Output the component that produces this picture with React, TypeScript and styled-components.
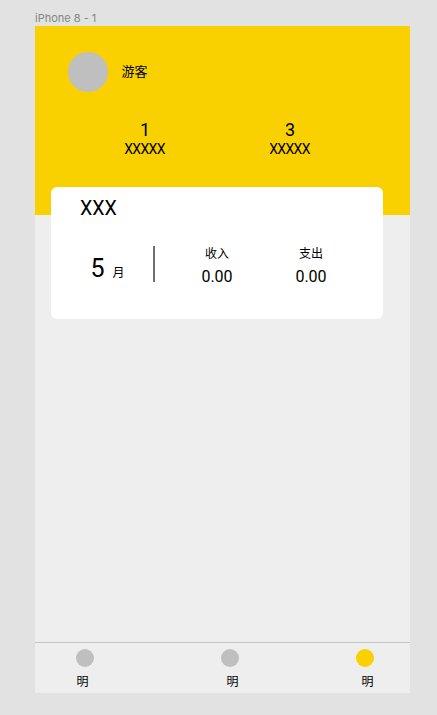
import React from 'react';
import styled, { createGlobalStyle } from 'styled-components';

const GlobalStyle = createGlobalStyle`
  * { box-sizing: border-box; }
  body {
    margin: 0;
    background: #e2e2e2;
    color: #000;
    font-family: Roboto, "Noto Sans CJK SC", sans-serif;
  }
`;

const Canvas = styled.main`
  width: 437px;
  height: 715px;
  padding: 10px 27px 0 35px;
  overflow: hidden;
  background: #e2e2e2;
`;

const FrameLabel = styled.div`
  height: 16px;
  font: 400 11px/16px Inter, sans-serif;
  color: #858585;
  white-space: nowrap;
`;

const Screen = styled.div`
  display: flex;
  flex-direction: column;
  width: 375px;
  height: 667px;
  background: #eee;
`;

const Header = styled.header`
  flex: none;
  height: 189px;
  padding-top: 26px;
  background: #f9d100;
`;

const Profile = styled.div`
  display: flex;
  align-items: center;
  gap: 13.5px;
  height: 40px;
  padding-left: 33px;
`;

const Circle = styled.div<{ $size: number; $active?: boolean }>`
  flex: none;
  width: ${(p) => p.$size}px;
  height: ${(p) => p.$size}px;
  border-radius: 50%;
  background: ${(p) => (p.$active ? '#f9d100' : '#bfbfbf')};
`;

const UserName = styled.span`
  font-size: 13px;
  line-height: 18px;
`;

const Stats = styled.div`
  display: grid;
  grid-template-columns: 145px 145px;
  margin: 28px 0 0 37px;
  text-align: center;
`;

const StatValue = styled.div`
  padding-left: 1px;
  font-size: 18px;
  line-height: 20px;
`;

const StatName = styled.div`
  font-size: 14px;
  letter-spacing: -0.65px;
  line-height: 18px;
`;

const Card = styled.section`
  flex: none;
  width: 332px;
  height: 132px;
  margin: -28px 0 0 16px;
  padding: 10px 0 0 29px;
  border-radius: 6px;
  background: #fff;
`;

const CardTitle = styled.h2`
  margin: 0;
  font-size: 19.6px;
  font-weight: 400;
  line-height: 24px;
`;

const Summary = styled.div`
  display: flex;
  align-items: flex-start;
  margin-top: 23px;
`;

const Month = styled.div`
  display: flex;
  align-items: baseline;
  gap: 8px;
  width: 73px;
  padding: 10px 0 0 10.5px;
  font-size: 25px;
  line-height: 30px;
`;

const MonthUnit = styled.span`
  font-size: 12px;
`;

const Divider = styled.div`
  width: 2px;
  height: 36px;
  margin-top: 2px;
  background: #707070;
`;

const Amount = styled.div`
  width: 94px;
  text-align: center;
`;

const Amounts = styled.div`
  display: flex;
  margin-left: 15px;
`;

const AmountName = styled.div`
  padding-top: 1px;
  font-size: 12px;
  line-height: 18px;
`;

const AmountValue = styled.div`
  margin-top: 4px;
  font-size: 16px;
  line-height: 20px;
`;

const TabBar = styled.nav`
  display: flex;
  height: 51px;
  margin-top: auto;
  padding: 6px 0 0 41px;
  border-top: 1px solid #c3c3c3;
`;

const Tab = styled.div<{ $width: number; $shift: number }>`
  width: ${(p) => p.$width}px;

  span {
    display: block;
    margin: 6px 0 0 ${(p) => p.$shift}px;
    font-size: 12px;
    line-height: 18px;
  }
`;

const stats = ['1', '3'];
const amounts = ['收入', '支出'];
const tabs = [
  { width: 145, shift: 0.5, active: false },
  { width: 135, shift: 5.5, active: false },
  { width: 30, shift: 5.5, active: true },
];

export default function App() {
  return (
    <Canvas>
      <GlobalStyle />
      <FrameLabel>iPhone 8 - 1</FrameLabel>
      <Screen>
        <Header>
          <Profile>
            <Circle $size={40} />
            <UserName>游客</UserName>
          </Profile>
          <Stats>
            {stats.map((value) => (
              <div key={value}>
                <StatValue>{value}</StatValue>
                <StatName>XXXXX</StatName>
              </div>
            ))}
          </Stats>
        </Header>
        <Card>
          <CardTitle>XXX</CardTitle>
          <Summary>
            <Month>
              5<MonthUnit>月</MonthUnit>
            </Month>
            <Divider />
            <Amounts>
              {amounts.map((name) => (
                <Amount key={name}>
                  <AmountName>{name}</AmountName>
                  <AmountValue>0.00</AmountValue>
                </Amount>
              ))}
            </Amounts>
          </Summary>
        </Card>
        <TabBar>
          {tabs.map((tab, index) => (
            <Tab key={index} $width={tab.width} $shift={tab.shift}>
              <Circle $size={18} $active={tab.active} />
              <span>明</span>
            </Tab>
          ))}
        </TabBar>
      </Screen>
    </Canvas>
  );
}
